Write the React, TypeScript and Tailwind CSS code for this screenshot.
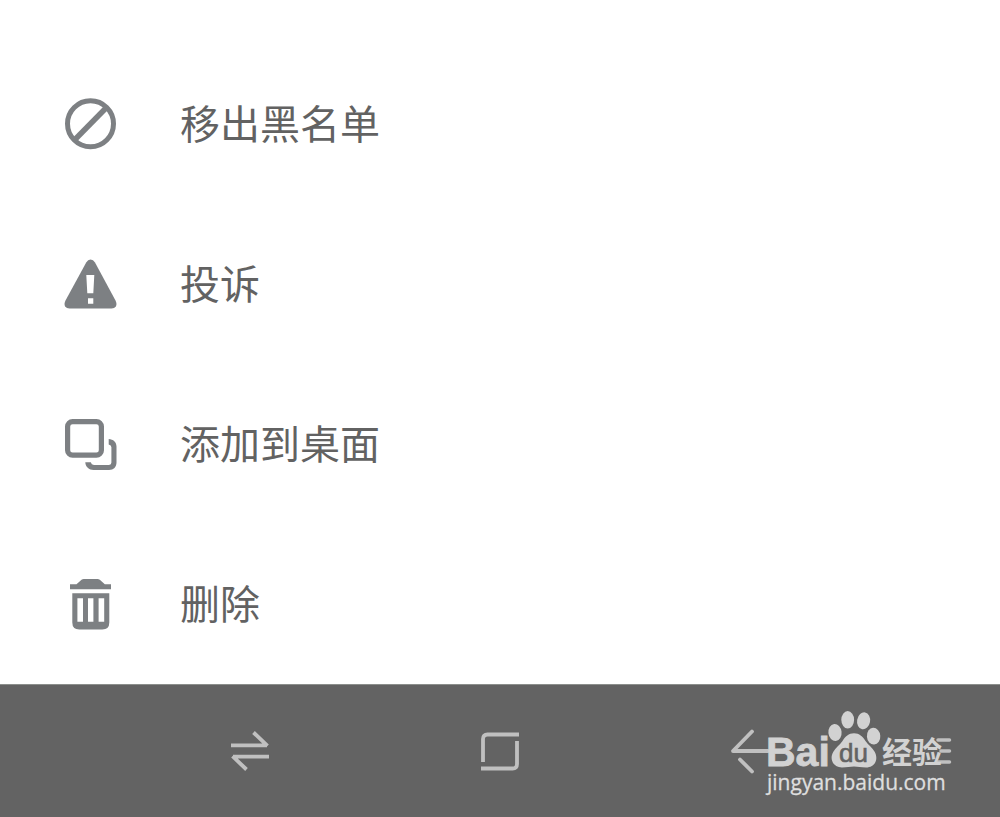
import type { ReactNode } from "react";

function BlockIcon() {
  return (
    <svg viewBox="0 0 60 60" className="size-15 shrink-0" fill="none" stroke="currentColor" strokeWidth="5" aria-hidden="true">
      <circle cx="30.5" cy="29.7" r="23" />
      <path strokeWidth="5.500" d="M14.500 46 L46.500 13.500" />
    </svg>
  );
}

function ReportIcon() {
  return (
    <svg viewBox="0 0 60 60" className="size-15 shrink-0" aria-hidden="true">
      <path
        fill="currentColor"
        d="M26.200 8.500 Q28 5.500 30.500 5.500 Q33.300 5.500 35 8.500 L55.500 46.500 Q57.300 50 55.800 52.500 Q54.500 54.500 51.500 54.500 H9.500 Q6.500 54.500 5.200 52.500 Q3.700 50 5.500 46.500 Z"
      />
      <path fill="#fff" d="M26.300 21 H34.300 L33.300 39.300 H27.300 Z M28 44.300 H33.300 V49.800 H28 Z" />
    </svg>
  );
}

function DesktopIcon() {
  return (
    <svg viewBox="0 0 60 60" className="size-15 shrink-0" aria-hidden="true">
      <rect x="7.600" y="7.600" width="33.800" height="33.600" rx="5" fill="none" stroke="currentColor" strokeWidth="5.200" />
      <path
        fill="currentColor"
        d="M48.700 25 C53.300 25.300 56.500 28.200 56.500 32.500 V48.500 C56.500 53 53.700 56 49 56 H33.500 C29 56 25.500 53 25.300 48.300 H30.800 Q31.300 50.900 34 50.900 H49 Q51.400 50.900 51.400 48.500 V33.300 Q51.400 31 48.700 30.500 Z"
      />
    </svg>
  );
}

function TrashIcon() {
  return (
    <svg viewBox="0 0 60 60" className="size-15 shrink-0" fill="currentColor" aria-hidden="true">
      <path d="M10 10.300 H16.500 L21.500 5.800 Q22.500 5 23.800 5 H37.500 Q38.800 5 39.800 5.800 L44.800 10.300 H51 V15.300 H10 Z" />
      <path
        fillRule="evenodd"
        d="M12.300 19.300 H49.300 V48.500 Q49.300 55.500 42.300 55.500 H19.300 Q12.300 55.500 12.300 48.500 Z M17.400 24.300 V47.700 H23 V24.300 Z M28 24.300 V47.700 H33.400 V24.300 Z M38.600 24.300 V47.700 H44.200 V24.300 Z"
      />
    </svg>
  );
}

const actions: { label: string; icon: ReactNode }[] = [
  { label: "移出黑名单", icon: <BlockIcon /> },
  { label: "投诉", icon: <ReportIcon /> },
  { label: "添加到桌面", icon: <DesktopIcon /> },
  { label: "删除", icon: <TrashIcon /> },
];

function NavButton({ label, children }: { label: string; children: ReactNode }) {
  return (
    <button type="button" aria-label={label} className="flex h-full items-center justify-center">
      <svg viewBox="0 0 40 40" className="size-10 overflow-visible" fill="none" stroke="currentColor" strokeWidth="3.800" aria-hidden="true">
        {children}
      </svg>
    </button>
  );
}

function Watermark() {
  return (
    <svg viewBox="0 0 200 100" className="pointer-events-none absolute top-4 right-10 h-[100px] w-[200px] text-[#d2d2d2]" fill="currentColor" role="img" aria-label="Baidu 经验">
      <g stroke="#c0c0c0" strokeWidth="3.500" strokeLinecap="round">
        <path d="M178 39 H189.500 M181 50 H189.500 M178 61 H189.500" />
      </g>
      <text x="6" y="65" fontSize="41" fontWeight="700" stroke="currentColor" strokeWidth="0.800" fontFamily="'Liberation Sans', Arial, sans-serif">Bai</text>
      <ellipse cx="75" cy="31.500" rx="6.600" ry="8.600" transform="rotate(-6 75 31.500)" />
      <ellipse cx="87.700" cy="18.800" rx="6.400" ry="8.700" />
      <ellipse cx="103.600" cy="19.800" rx="6.500" ry="8.500" transform="rotate(10 103.600 19.800)" />
      <ellipse cx="113.600" cy="35.200" rx="6.700" ry="8.400" transform="rotate(-4 113.600 35.200)" />
      <path d="M94 32.300 C99.500 32.300 102.500 35.500 105.500 40 C108 44 112.500 46.500 114.800 51 C119 59.500 114 66.500 106 66.500 C101 66.500 98 65.600 94 65.600 C90 65.600 87 66.500 82 66.500 C73.500 66.300 69 58.500 73.200 51 C75.500 46.500 80 44 82.500 40 C85.500 35.500 88.500 32.300 94 32.300 Z" />
      <text x="79" y="61" fontSize="26" fill="#636363" stroke="#636363" strokeWidth="0.600" fontFamily="'Liberation Sans', Arial, sans-serif">du</text>
      <text x="122" y="62" fontSize="30" fontWeight="700" fontFamily="'Noto Sans CJK SC', sans-serif">经验</text>
      <text x="7" y="89" fontSize="21" fill="#dedede" stroke="#dedede" strokeWidth="0.300" fontFamily="'Open Sans', 'Noto Sans', sans-serif">jingyan.baidu.com</text>
    </svg>
  );
}

export default function App() {
  return (
    <div className="flex min-h-screen flex-col bg-white font-['Noto_Sans_CJK_SC',sans-serif]">
      <main className="flex-1 pt-11">
        <ul>
          {actions.map((action) => (
            <li key={action.label}>
              <button type="button" className="flex h-40 w-full items-center gap-15 px-15 text-left text-[#7d8083]">
                {action.icon}
                <span className="pb-1 text-[40px] leading-15 text-[#626262]">{action.label}</span>
              </button>
            </li>
          ))}
        </ul>
      </main>
      <nav className="relative grid h-[133px] grid-cols-3 border-t border-[#8c8f8c] bg-[#636363] px-[12.5%] text-[#c0c0c0]">
        <NavButton label="最近任务">
          <path d="M1 14.300 H37 M23.500 1.500 L37.500 14.800 M39 25.700 H3 M16.500 38.500 L2.500 25.200" />
        </NavButton>
        <NavButton label="主屏幕">
          <path d="M3 31 V8 Q3 3.500 7.500 3.500 H39 M37 10 V33 Q37 37.500 32.500 37.500 H1" />
        </NavButton>
        <NavButton label="返回">
          <path strokeWidth="3.800" strokeLinecap="round" strokeLinejoin="round" d="M38 20 H3 L22 0.500 M10 28.500 L22 40.500" />
        </NavButton>
        <Watermark />
      </nav>
    </div>
  );
}
